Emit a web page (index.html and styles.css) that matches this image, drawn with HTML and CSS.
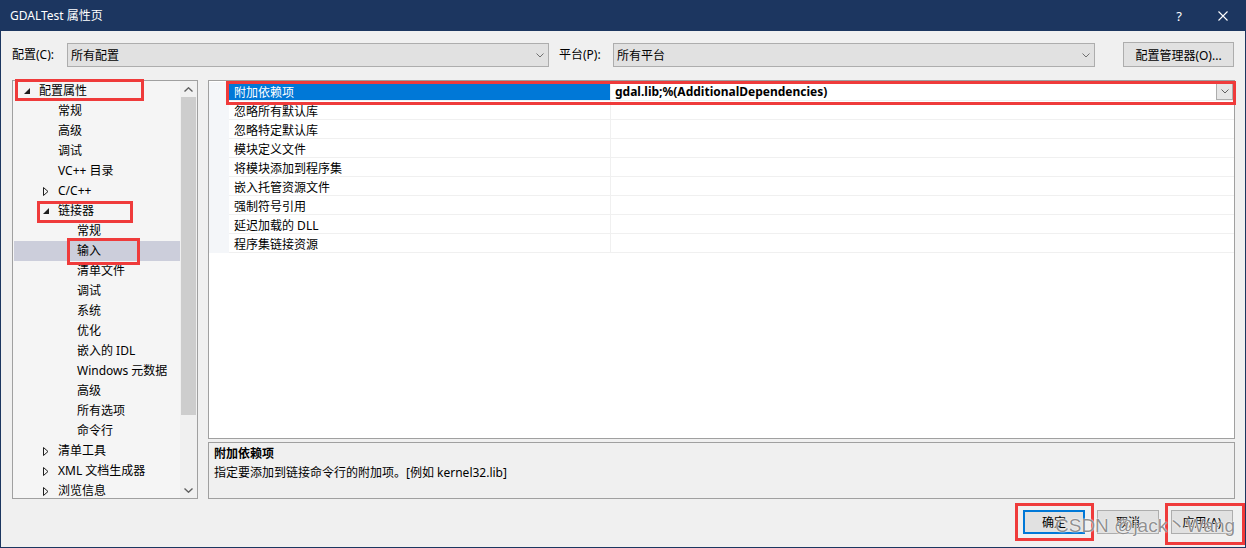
FILE: index.html
```html
<!DOCTYPE html>
<html lang="zh-CN">
<head>
    <meta charset="UTF-8">
    <title>GDALTest 属性页</title>
    <link rel="stylesheet" href="styles.css">
</head>
<body>
<div class="window">
    <div class="titlebar">
        <span class="title">GDALTest 属性页</span>
        <span class="caption-btns">
            <span class="help">?</span>
            <svg class="close" width="10" height="10" viewBox="0 0 10 10"><path d="M0.5 0.5 L9.5 9.5 M9.5 0.5 L0.5 9.5" stroke="#fff" stroke-width="1.1" fill="none"/></svg>
        </span>
    </div>

    <div class="toolbar">
        <span class="tb-label">配置(C):</span>
        <div class="combo">
            <span>所有配置</span>
            <svg class="chev" width="8" height="5" viewBox="0 0 8 5"><path d="M0.5 0.5 L4 4 L7.5 0.5" stroke="#707070" fill="none"/></svg>
        </div>
        <span class="tb-label plat">平台(P):</span>
        <div class="combo">
            <span>所有平台</span>
            <svg class="chev" width="8" height="5" viewBox="0 0 8 5"><path d="M0.5 0.5 L4 4 L7.5 0.5" stroke="#707070" fill="none"/></svg>
        </div>
        <button class="btn mgr">配置管理器(O)...</button>
    </div>

    <div class="main">
        <div class="tree">
            <ul class="tree-list">
                <li class="node l0"><span class="twisty"><svg width="6" height="6" viewBox="0 0 6 6"><path d="M6 0 L6 6 L0 6 Z" fill="#1e1e1e"/></svg></span>配置属性</li>
                <li class="node l1"><span class="twisty"></span>常规</li>
                <li class="node l1"><span class="twisty"></span>高级</li>
                <li class="node l1"><span class="twisty"></span>调试</li>
                <li class="node l1"><span class="twisty"></span>VC++ 目录</li>
                <li class="node l1"><span class="twisty"><svg width="6" height="9" viewBox="0 0 6 9"><path d="M0.5 0.5 L5 4.5 L0.5 8.5 Z" fill="none" stroke="#1e1e1e"/></svg></span>C/C++</li>
                <li class="node l1"><span class="twisty"><svg width="6" height="6" viewBox="0 0 6 6"><path d="M6 0 L6 6 L0 6 Z" fill="#1e1e1e"/></svg></span>链接器</li>
                <li class="node l2"><span class="twisty"></span>常规</li>
                <li class="node l2 selected"><span class="twisty"></span>输入</li>
                <li class="node l2"><span class="twisty"></span>清单文件</li>
                <li class="node l2"><span class="twisty"></span>调试</li>
                <li class="node l2"><span class="twisty"></span>系统</li>
                <li class="node l2"><span class="twisty"></span>优化</li>
                <li class="node l2"><span class="twisty"></span>嵌入的 IDL</li>
                <li class="node l2"><span class="twisty"></span>Windows 元数据</li>
                <li class="node l2"><span class="twisty"></span>高级</li>
                <li class="node l2"><span class="twisty"></span>所有选项</li>
                <li class="node l2"><span class="twisty"></span>命令行</li>
                <li class="node l1"><span class="twisty"><svg width="6" height="9" viewBox="0 0 6 9"><path d="M0.5 0.5 L5 4.5 L0.5 8.5 Z" fill="none" stroke="#1e1e1e"/></svg></span>清单工具</li>
                <li class="node l1"><span class="twisty"><svg width="6" height="9" viewBox="0 0 6 9"><path d="M0.5 0.5 L5 4.5 L0.5 8.5 Z" fill="none" stroke="#1e1e1e"/></svg></span>XML 文档生成器</li>
                <li class="node l1"><span class="twisty"><svg width="6" height="9" viewBox="0 0 6 9"><path d="M0.5 0.5 L5 4.5 L0.5 8.5 Z" fill="none" stroke="#1e1e1e"/></svg></span>浏览信息</li>
            </ul>
            <div class="vscroll">
                <div class="sb-arrow"><svg width="9" height="5" viewBox="0 0 9 5"><path d="M0.5 4.5 L4.5 0.8 L8.5 4.5" stroke="#606060" stroke-width="1.4" fill="none"/></svg></div>
                <div class="sb-track"><div class="sb-thumb"></div></div>
                <div class="sb-arrow"><svg width="9" height="5" viewBox="0 0 9 5"><path d="M0.5 0.5 L4.5 4.2 L8.5 0.5" stroke="#606060" stroke-width="1.4" fill="none"/></svg></div>
            </div>
        </div>

        <div class="right">
            <div class="grid">
                <div class="row selected">
                    <span class="gutter"></span>
                    <span class="name">附加依赖项</span>
                    <span class="value">gdal.lib;%(AdditionalDependencies)
                        <span class="drop"><svg width="8" height="5" viewBox="0 0 8 5"><path d="M0.5 0.5 L4 4 L7.5 0.5" stroke="#606060" fill="none"/></svg></span>
                    </span>
                </div>
                <div class="row"><span class="gutter"></span><span class="name">忽略所有默认库</span><span class="value"></span></div>
                <div class="row"><span class="gutter"></span><span class="name">忽略特定默认库</span><span class="value"></span></div>
                <div class="row"><span class="gutter"></span><span class="name">模块定义文件</span><span class="value"></span></div>
                <div class="row"><span class="gutter"></span><span class="name">将模块添加到程序集</span><span class="value"></span></div>
                <div class="row"><span class="gutter"></span><span class="name">嵌入托管资源文件</span><span class="value"></span></div>
                <div class="row"><span class="gutter"></span><span class="name">强制符号引用</span><span class="value"></span></div>
                <div class="row"><span class="gutter"></span><span class="name">延迟加载的 DLL</span><span class="value"></span></div>
                <div class="row"><span class="gutter"></span><span class="name">程序集链接资源</span><span class="value"></span></div>
            </div>
            <div class="desc">
                <div class="desc-title">附加依赖项</div>
                <div class="desc-text">指定要添加到链接命令行的附加项。[例如 kernel32.lib]</div>
            </div>
        </div>
    </div>

    <div class="footer">
        <button class="btn default">确定</button>
        <button class="btn">取消</button>
        <button class="btn">应用(A)</button>
    </div>

    <!-- red annotation boxes -->
    <div class="mark m-config"></div>
    <div class="mark m-linker"></div>
    <div class="mark m-input"></div>
    <div class="mark m-row"></div>
    <div class="mark m-ok"></div>
    <div class="mark m-apply"></div>

    <div class="watermark">CSDN @jack丶Wang</div>
</div>
</body>
</html>
```

FILE: styles.css
```css
body {
    margin: 0;
    font-family: "Noto Sans", "Noto Sans CJK SC", sans-serif;
    font-size: 12px;
    color: #000;
}
.window {
    position: relative;
    width: 1246px;
    height: 548px;
    box-sizing: border-box;
    border: 1px solid #1c3660;
    border-top: 0;
    background-color: #f0f0f0;
    overflow: hidden;
}
.titlebar {
    height: 31px;
    background-color: #1c3660;
    color: #fff;
    display: flex;
    align-items: center;
    justify-content: space-between;
    padding-left: 9px;
}
.title {
    line-height: 31px;
}
.caption-btns {
    display: flex;
    align-items: center;
    gap: 36px;
    padding-right: 17px;
}
.help {
    font-size: 13px;
}

/* toolbar */
.toolbar {
    display: flex;
    align-items: flex-start;
    margin-top: 11px;
    padding-left: 11px;
    height: 25px;
}
.tb-label {
    width: 55px;
    line-height: 25px;
}
.tb-label.plat {
    width: 54px;
    margin-left: 10px;
}
.combo {
    width: 482px;
    height: 24px;
    margin-top: 1px;
    box-sizing: border-box;
    border: 1px solid #adadad;
    background-color: #e1e1e1;
    display: flex;
    align-items: center;
    justify-content: space-between;
    padding: 0 4px 0 3px;
}
.btn {
    font-family: inherit;
    font-size: 12px;
    background-color: #e1e1e1;
    border: 1px solid #adadad;
    padding: 0;
    color: #000;
    box-sizing: border-box;
}
.btn.mgr {
    margin-left: 28px;
    width: 111px;
    height: 25px;
}

/* main */
.main {
    display: flex;
    gap: 10px;
    margin-top: 13px;
    padding-left: 11px;
    height: 419px;
}
.tree {
    width: 186px;
    box-sizing: border-box;
    border: 1px solid #a0a0a0;
    background-color: #f5f5f5;
    display: flex;
    overflow: hidden;
}
.tree-list {
    list-style: none;
    margin: 0;
    padding: 0 0 0 1px;
    flex: 1;
    overflow: hidden;
}
.node {
    height: 20px;
    line-height: 20px;
    display: flex;
    align-items: center;
    white-space: nowrap;
}
.node.l0 { padding-left: 6px; }
.node.l1 { padding-left: 25px; }
.node.l2 { padding-left: 44px; }
.node.selected {
    background-color: #cccedb;
}
.twisty {
    width: 19px;
    box-sizing: border-box;
    padding-left: 4px;
    display: flex;
    align-items: center;
}
.vscroll {
    width: 17px;
    background-color: #f0f0f0;
    display: flex;
    flex-direction: column;
}
.sb-arrow {
    height: 16px;
    display: flex;
    align-items: center;
    justify-content: center;
}
.sb-track {
    flex: 1;
    padding: 0 1px;
}
.sb-thumb {
    height: 318px;
    background-color: #cdcdcd;
}

/* property grid */
.right {
    width: 1027px;
    display: flex;
    flex-direction: column;
    gap: 3px;
}
.grid {
    height: 359px;
    box-sizing: border-box;
    border: 1px solid #a0a0a0;
    background-color: #fff;
    padding-top: 1px;
}
.row {
    display: grid;
    grid-template-columns: 20px 382px 1fr;
    height: 19px;
}
.gutter {
    background-color: #f4f6f9;
}
.name, .value {
    box-sizing: border-box;
    height: 19px;
    border-bottom: 1px solid #f0f0f0;
    padding-top: 2px;
    line-height: 17px;
    white-space: nowrap;
}
.name {
    border-right: 1px solid #f0f0f0;
    padding-left: 5px;
}
.value {
    padding-left: 4px;
    display: flex;
    align-items: center;
    justify-content: space-between;
}
.row.selected .name {
    background-color: #0078d7;
    color: #fff;
}
.row.selected .value {
    font-weight: bold;
    padding-top: 1px;
}
.drop {
    width: 17px;
    height: 17px;
    margin-right: 1px;
    box-sizing: border-box;
    border: 1px solid #adadad;
    background-color: #e6e6e6;
    display: flex;
    align-items: center;
    justify-content: center;
}
.desc {
    height: 57px;
    box-sizing: border-box;
    border: 1px solid #a0a0a0;
    padding: 1px 5px 0;
    line-height: 19px;
}
.desc-title {
    font-weight: bold;
}

/* footer buttons */
.footer {
    display: flex;
    justify-content: flex-end;
    gap: 12px;
    margin-top: 11px;
    padding-right: 12px;
}
.footer .btn {
    width: 62px;
    height: 24px;
}
.footer .btn.default {
    border-color: #0078d7;
    box-shadow: inset 0 0 0 1px #0078d7;
}

/* annotation overlays */
.mark {
    position: absolute;
    border: 3px solid #ef3b3b;
    box-sizing: border-box;
}
.m-config { left: 14px; top: 79px; width: 129px; height: 22px; }
.m-linker { left: 36px; top: 201px; width: 96px; height: 22px; }
.m-input { left: 66px; top: 238px; width: 73px; height: 27px; }
.m-row { left: 225px; top: 81px; width: 1010px; height: 24px; }
.m-ok { left: 1014px; top: 503px; width: 79px; height: 38px; }
.m-apply { left: 1164px; top: 503px; width: 80px; height: 42px; }

.watermark {
    position: absolute;
    left: 1054px;
    top: 510px;
    font-family: "Liberation Sans", "Noto Sans CJK SC", sans-serif;
    font-size: 19px;
    color: rgba(95, 95, 95, 0.7);
    text-shadow: 0 0 1px #fff, 0 0 2px #fff;
    white-space: nowrap;
}
```
